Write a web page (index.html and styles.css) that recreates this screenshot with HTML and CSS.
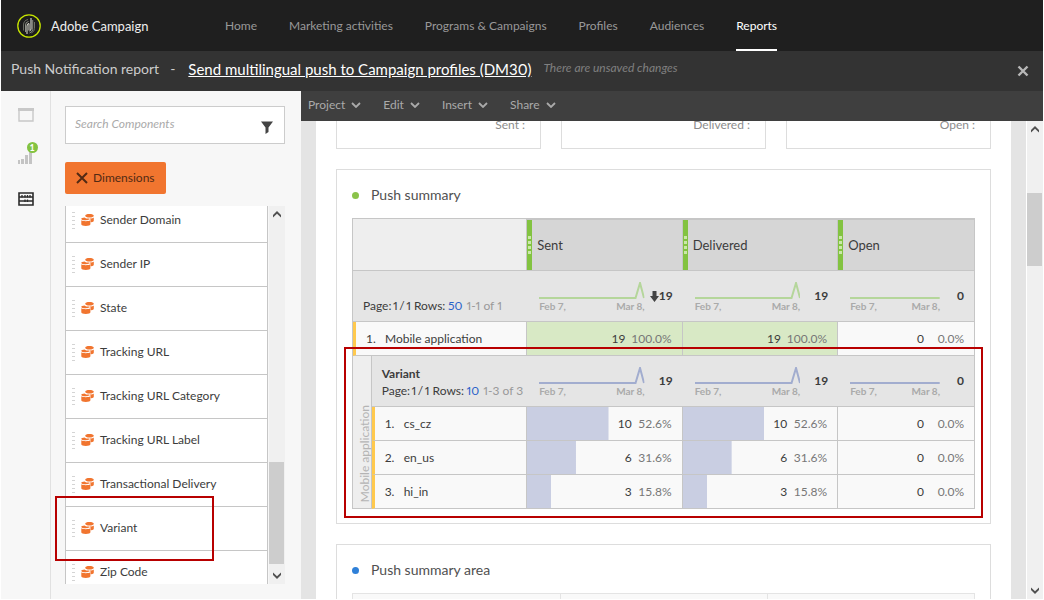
FILE: index.html
```html
<!DOCTYPE html>
<html lang="en">
<head>
<meta charset="utf-8">
<title>Adobe Campaign - Push Notification report</title>
<link rel="stylesheet" href="styles.css">
</head>
<body>
<svg class="sprite" aria-hidden="true">
  <symbol id="coins" viewBox="0 0 13 12">
    <path fill="#f1752f" d="M4.200 1.800C4.200.6 6 0 8.400 0s4.400.6 4.400 1.700S11 3.600 8.500 3.600 4.200 2.900 4.200 1.800zM8.800 4.600c1.800 0 3.300-.3 4-1v2.900c0 1-1 1.600-2.600 1.800l-.6-.2V5.800z"/>
    <path fill="#f1752f" d="M3.600 3.400c.8.9 2.100 1.200 4.500 1.200l.7.5c-.4.700-1.800 1.100-4 1.100C2 6.200.3 5.700.3 4.700c0-.7 1.300-1.200 3.300-1.300zM.3 6.300c1 .7 2.500.9 4.500.9s3.600-.2 4.600-.9v3.900c0 1.100-2 1.700-4.600 1.700S.3 11.300.3 10.200z"/>
  </symbol>
  <symbol id="chev" viewBox="0 0 10 6"><path d="M1 1l4 4 4-4" fill="none" stroke="currentColor" stroke-width="1.800"/></symbol>
  <symbol id="up" viewBox="0 0 8 7"><path d="M0 4l4-4 4 4v2.500L4 2.700 0 6.500z" fill="#505050"/></symbol>
  <symbol id="down" viewBox="0 0 8 7"><path d="M0 3l4 4 4-4V.5L4 4.300 0 .5z" fill="#505050"/></symbol>
  <symbol id="peak" viewBox="0 0 106 18" preserveAspectRatio="none"><path d="M0 16h97l4.500-15 4 15" fill="none" stroke="currentColor" stroke-width="2"/></symbol>
  <symbol id="flat" viewBox="0 0 106 18" preserveAspectRatio="none"><path d="M0 16h106" fill="none" stroke="currentColor" stroke-width="2"/></symbol>
  <symbol id="dots" viewBox="0 0 5 18"><path d="M1 0h3v3H1zM1 5h3v3H1zM1 10h3v3H1zM1 15h3v3H1z" fill="#cbe8a8"/></symbol>
  <symbol id="grip" viewBox="0 0 3 18"><path d="M0 1.500h3M0 5.500h3M0 9.500h3M0 13.500h3M0 17.500h3M1.500 1v1M1.500 5v1" stroke="#d4d4d4" stroke-width="1"/></symbol>
</svg>
<div class="app">
  <header class="topbar">
    <svg class="logo" viewBox="0 0 24 24" aria-hidden="true">
      <circle cx="12" cy="12" r="11.200" fill="#1c1c1c" stroke="#c6e400" stroke-width="1.300"/>
      <g fill="none" stroke-width="1">
        <path stroke="#6a6c62" d="M6.500 16.500V11q0-4.500 4.500-5.500"/>
        <path stroke="#8f9187" d="M8.500 18v-7q0-3 3-3.500"/>
        <path stroke="#e4e4d8" d="M10 20v-8q0-2.500 2-2.500v7"/>
        <path stroke="#f4f4ec" d="M14 4v11q0 1.500-1.500 2"/>
        <path stroke="#8f9187" d="M15.700 6v9.500q0 2.500-3.200 3.500"/>
        <path stroke="#6a6c62" d="M17.500 8v6.500q0 3-3 4.500"/>
      </g>
    </svg>
    <span class="brand">Adobe Campaign</span>
    <nav class="nav">
      <a href="#">Home</a><a href="#">Marketing activities</a><a href="#">Programs &amp; Campaigns</a><a href="#">Profiles</a><a href="#">Audiences</a><a href="#" class="active" aria-current="page">Reports</a>
    </nav>
  </header>
  <div class="titlebar">
    <span class="kind">Push Notification report</span><span class="dash">-</span>
    <a href="#" class="report-name">Send multilingual push to Campaign profiles (DM30)</a>
    <em class="unsaved">There are unsaved changes</em>
    <button class="close" aria-label="Close"><svg viewBox="0 0 12 12" width="12" height="12"><path d="M1.500 1.500l9 9M10.500 1.500l-9 9" stroke="#b8b8b8" stroke-width="2.400"/></svg></button>
  </div>
  <div class="body">
    <nav class="rail" aria-label="Panels">
      <button aria-label="Panels"><svg width="16" height="14" viewBox="0 0 16 14"><path d="M1 1h14v12H1z" fill="none" stroke="#c8c8c8" stroke-width="1.400"/><path d="M0 0h16v3H0z" fill="#c8c8c8"/></svg></button>
      <button aria-label="Visualizations"><svg width="16" height="14" viewBox="0 0 16 14"><path d="M0 10h2v4H0zM3 9h3v5H3zM7 5h3v9H7zM11 1h3v13h-3z" fill="#c4c4c4"/></svg><span class="badge">1</span></button>
      <button aria-label="Components"><svg width="16" height="14" viewBox="0 0 16 14"><path d="M1 1h14v12H1zM1 5h14M1 9h14" fill="none" stroke="#2c2c2c" stroke-width="1.600"/><path d="M4 3v2.500M7 3v2.500M9.500 3v2.500M12 3v2.500M7 7.500v2.500M9.500 7.500v2.500" stroke="#2c2c2c" stroke-width="1.300"/></svg></button>
    </nav>
    <aside class="panel">
      <div class="search">
        <input type="text" placeholder="Search Components" aria-label="Search Components">
        <button aria-label="Filter"><svg width="12" height="13" viewBox="0 0 12 13"><path d="M0 .5h12L7.500 6.500v4.500L4.500 13V6.500z" fill="#444"/></svg></button>
      </div>
      <button class="dimensions"><svg width="12" height="12" viewBox="0 0 12 12"><path d="M1 1l10 10M11 1L1 11" stroke="#522a14" stroke-width="2"/></svg>Dimensions</button>
      <div class="list-area">
        <ul class="list">
          <li><svg class="grip"><use href="#grip"/></svg><svg class="coins"><use href="#coins"/></svg>Sender Domain</li>
          <li><svg class="grip"><use href="#grip"/></svg><svg class="coins"><use href="#coins"/></svg>Sender IP</li>
          <li><svg class="grip"><use href="#grip"/></svg><svg class="coins"><use href="#coins"/></svg>State</li>
          <li><svg class="grip"><use href="#grip"/></svg><svg class="coins"><use href="#coins"/></svg>Tracking URL</li>
          <li><svg class="grip"><use href="#grip"/></svg><svg class="coins"><use href="#coins"/></svg>Tracking URL Category</li>
          <li><svg class="grip"><use href="#grip"/></svg><svg class="coins"><use href="#coins"/></svg>Tracking URL Label</li>
          <li><svg class="grip"><use href="#grip"/></svg><svg class="coins"><use href="#coins"/></svg>Transactional Delivery</li>
          <li><svg class="grip"><use href="#grip"/></svg><svg class="coins"><use href="#coins"/></svg>Variant</li>
          <li><svg class="grip"><use href="#grip"/></svg><svg class="coins"><use href="#coins"/></svg>Zip Code</li>
        </ul>
        <div class="scroll list-scroll"><svg class="arrow"><use href="#up"/></svg><span class="thumb"></span><svg class="arrow"><use href="#down"/></svg></div>
        <span class="mark mark-variant"></span>
      </div>
    </aside>
    <section class="workspace">
      <div class="menubar">
        <button>Project<svg><use href="#chev"/></svg></button>
        <button>Edit<svg><use href="#chev"/></svg></button>
        <button>Insert<svg><use href="#chev"/></svg></button>
        <button>Share<svg><use href="#chev"/></svg></button>
      </div>
      <div class="stage">
        <main class="canvas">
          <div class="kpis"><div>Sent :</div><div>Delivered :</div><div>Open :</div></div>
          <section class="card">
            <h2><i class="dot"></i>Push summary</h2>
            <div class="table-wrap">
              <table>
                <colgroup><col class="c-side"><col class="c-name"><col class="c-num"><col class="c-num"><col class="c-open"></colgroup>
                <tr class="head"><td colspan="2"></td><th scope="col"><div><svg><use href="#dots"/></svg>Sent</div></th><th scope="col"><div><svg><use href="#dots"/></svg>Delivered</div></th><th scope="col"><div><svg><use href="#dots"/></svg>Open</div></th></tr>
                <tr class="totals green">
                  <td colspan="2" class="pager"><div>Page:&thinsp;1&thinsp;/&thinsp;1 Rows:&thinsp;<a href="#">50</a> <span>1-1 of 1</span></div></td>
                  <td><div class="tot"><div class="spark"><svg><use href="#peak"/></svg><p><span>Feb 7,</span><span>Mar 8,</span></p></div><b><svg class="sort" viewBox="0 0 9 11"><path d="M2.500 0h4v5H9l-4.500 6L0 5h2.500z" fill="#444"/></svg>19</b></div></td>
                  <td><div class="tot"><div class="spark"><svg><use href="#peak"/></svg><p><span>Feb 7,</span><span>Mar 8,</span></p></div><b>19</b></div></td>
                  <td><div class="tot short"><div class="spark"><svg><use href="#flat"/></svg><p><span>Feb 7,</span><span>Mar 8,</span></p></div><b>0</b></div></td>
                </tr>
                <tr class="row green">
                  <td colspan="2" class="name"><i>1.</i>Mobile application</td>
                  <td class="full"><div class="val"><span>19</span><span>100.0%</span></div></td>
                  <td class="full"><div class="val"><span>19</span><span>100.0%</span></div></td>
                  <td><div class="val"><span>0</span><span>0.0%</span></div></td>
                </tr>
                <tr class="totals blue">
                  <td rowspan="4" class="side"><span>Mobile application</span></td>
                  <td class="pager"><div><strong>Variant</strong>Page:&thinsp;1&thinsp;/&thinsp;1 Rows:&thinsp;<a href="#">10</a> <span>1-3 of 3</span></div></td>
                  <td><div class="tot"><div class="spark"><svg><use href="#peak"/></svg><p><span>Feb 7,</span><span>Mar 8,</span></p></div><b>19</b></div></td>
                  <td><div class="tot"><div class="spark"><svg><use href="#peak"/></svg><p><span>Feb 7,</span><span>Mar 8,</span></p></div><b>19</b></div></td>
                  <td><div class="tot short"><div class="spark"><svg><use href="#flat"/></svg><p><span>Feb 7,</span><span>Mar 8,</span></p></div><b>0</b></div></td>
                </tr>
                <tr class="row sub">
                  <td class="name"><i>1.</i>cs_cz</td>
                  <td><div class="val" style="--share:52.6%"><span>10</span><span>52.6%</span></div></td>
                  <td><div class="val" style="--share:52.6%"><span>10</span><span>52.6%</span></div></td>
                  <td><div class="val"><span>0</span><span>0.0%</span></div></td>
                </tr>
                <tr class="row sub">
                  <td class="name"><i>2.</i>en_us</td>
                  <td><div class="val" style="--share:31.6%"><span>6</span><span>31.6%</span></div></td>
                  <td><div class="val" style="--share:31.6%"><span>6</span><span>31.6%</span></div></td>
                  <td><div class="val"><span>0</span><span>0.0%</span></div></td>
                </tr>
                <tr class="row sub">
                  <td class="name"><i>3.</i>hi_in</td>
                  <td><div class="val" style="--share:15.8%"><span>3</span><span>15.8%</span></div></td>
                  <td><div class="val" style="--share:15.8%"><span>3</span><span>15.8%</span></div></td>
                  <td><div class="val"><span>0</span><span>0.0%</span></div></td>
                </tr>
              </table>
              <span class="mark mark-table"></span>
            </div>
          </section>
          <section class="card">
            <h2><i class="dot dot-blue"></i>Push summary area</h2>
            <div class="area"><i></i><i></i><i></i></div>
          </section>
        </main>
        <div class="scroll stage-scroll"><svg class="arrow"><use href="#up"/></svg><span class="thumb"></span><svg class="arrow"><use href="#down"/></svg></div>
      </div>
    </section>
  </div>
</div>
</body>
</html>
```
FILE: styles.css
```css
* { box-sizing: border-box; }
body { margin: 0; background: #fff; color: #3c3c3c; font: 12px/16px Lato, "Open Sans", sans-serif; }
button { border: 0; padding: 0; background: none; font: inherit; color: inherit; }
a { color: inherit; text-decoration: none; }
i { font-style: normal; }
.sprite { display: none; }
.app { height: calc(100vh - 1px); margin: 0 1px; display: flex; flex-direction: column; overflow: hidden; }

.topbar { height: 51px; flex: none; display: flex; align-items: center; padding-left: 16px; background: #1f1f1f; color: #999; }
.logo { width: 24px; height: 24px; flex: none; }
.brand { margin-left: 10px; width: 98px; color: #eee; font-size: 13px; white-space: nowrap; }
.nav { display: flex; gap: 32px; margin-left: 76px; height: 100%; white-space: nowrap; }
.nav a { display: flex; align-items: center; height: 51px; padding-top: 2px; border-bottom: 2px solid transparent; }
.nav .active { color: #fff; border-color: #fff; }

.titlebar { height: 40px; flex: none; display: flex; align-items: center; padding: 0 14px 4px 10px; background: #333; white-space: nowrap; font-size: 14px; line-height: 18px; color: #ccc; font-variant-numeric: proportional-nums; }
.dash { margin: 0 13px 0 11px; }
.report-name { color: #fff; font-size: 15px; text-decoration: underline; }
.unsaved { margin-left: 12px; padding-bottom: 2px; font-size: 12px; color: #808080; }
.close { margin-left: auto; padding-top: 4px; display: flex; }

.body { flex: 1; min-height: 0; display: flex; background: #f7f7f7; }
.rail { width: 50px; flex: none; border-right: 1px solid #e1e1e1; display: flex; flex-direction: column; align-items: center; gap: 28px; padding-top: 17px; }
.rail button { position: relative; display: flex; }
.badge { position: absolute; top: -8px; right: -4px; width: 11px; height: 11px; border-radius: 50%; background: #83c341; color: #fff; font-size: 9px; font-weight: bold; line-height: 11px; text-align: center; }

.panel { width: 250px; flex: none; padding: 15px 16px 15px 14px; display: flex; flex-direction: column; align-items: flex-start; }
.search { width: 100%; height: 38px; flex: none; display: flex; align-items: center; border: 1px solid #ccc; background: #fff; padding-right: 11px; }
.search input { flex: 1; min-width: 0; border: 0; outline: 0; padding: 0 0 2px 9px; background: none; font: italic 12px/16px Lato, sans-serif; }
.search input::placeholder { color: #aaa; opacity: 1; }
.search button { display: flex; padding-top: 4px; }
.dimensions { height: 32px; flex: none; margin: 18px 0 12px; padding: 0 11px; display: flex; align-items: center; gap: 5px; border-radius: 2px; background: #f1752f; color: #522a14; }
.list-area { position: relative; flex: 1; min-height: 0; width: 100%; display: flex; gap: 1px; }
.list { flex: 1; margin: 0; padding: 0; list-style: none; overflow: hidden; border: solid #c6c6c6; border-width: 0 1px; background: #fff; }
.list li { height: 44px; display: flex; align-items: center; padding: 0 0 1px 6px; border-bottom: 1px solid #c6c6c6; }
.list li:first-child { margin-top: -7px; }
.grip { width: 3px; height: 18px; }
.coins { width: 13px; height: 12px; margin: 0 6px; }
.scroll { width: 16px; flex: none; background: #f0f0f0; display: flex; flex-direction: column; }
.arrow { width: 8px; height: 7px; margin: 5px 4px; flex: none; }
.thumb { width: 15px; background: #cdcdcd; }
.list-scroll .thumb { height: 27%; margin-top: auto; }
.list-scroll .arrow:last-child { margin: 8px 4px 5px; }
.mark { position: absolute; border: 2px solid #b80000; pointer-events: none; }
.mark-variant { left: -10px; top: 290px; width: 159px; height: 65px; }

.workspace { flex: 1; min-width: 0; display: flex; flex-direction: column; }
.menubar { height: 30px; flex: none; display: flex; align-items: center; gap: 22px; padding: 0 7px 3px; background: #3f3f3f; color: #aaa; }
.menubar button { display: flex; align-items: center; gap: 6px; }
.menubar svg { width: 10px; height: 6px; }
.stage { flex: 1; min-height: 0; display: flex; background: #e4e4e4; padding-left: 15px; }
.canvas { flex: 1; min-width: 0; overflow: hidden; background: #fff; padding: 0 20px; }
.stage-scroll { margin-left: 15px; width: 17px; border-left: 1px solid #fff; }
.stage-scroll .thumb { height: 73px; margin-top: 55px; }
.stage-scroll .arrow:last-child { margin-top: auto; }
.kpis { display: grid; grid-template-columns: repeat(3, 1fr); gap: 20px; margin-top: -40px; }
.kpis div { height: 68px; display: flex; align-items: flex-end; justify-content: flex-end; padding: 0 15px 15px; border: 1px solid #ddd; color: #8c8c8c; }
.card { margin-top: 20px; border: 1px solid #ddd; padding: 16px 15px 14px; }
.card h2 { margin: 0 0 14px; display: flex; align-items: center; gap: 12px; font-size: 14px; line-height: 18px; font-weight: normal; color: #505050; }
.dot { width: 7px; height: 7px; border-radius: 50%; background: #8bc34a; }
.dot-blue { background: #2f80d8; }
.area { display: grid; grid-template-columns: repeat(3, 1fr); height: 120px; border: 1px solid #e4e4e4; background: #f9f9f9; }
.area i + i { border-left: 1px solid #e4e4e4; }

.table-wrap { position: relative; }
.mark-table { inset: 129px -8px -9px; }
table { width: 100%; table-layout: fixed; border-collapse: separate; border-spacing: 0; border: solid #c6c6c6; border-width: 1px 0 0 1px; background: #f9f9f9; }
.c-side { width: 3%; }
.c-name, .c-num { width: 25%; }
.c-open { width: 22%; }
td, th { padding: 0; text-align: left; font-weight: normal; border: solid #c6c6c6; border-width: 0 1px 1px 0; }
.head td { background: #eee; }
.head th { height: 52px; background: #d6d6d6; border-top: 1px solid #c6c6c6; font-size: 13px; }
.head div { display: flex; align-items: center; gap: 5px; }
.head svg { width: 5px; height: 50px; padding: 16px 0; background: #83c341; }
.totals { background: #e5e5e5; }
.totals td { height: 51px; }
.totals td:not(:last-child):not(.side) { border-right: 0; }
.pager { white-space: nowrap; vertical-align: bottom; font-variant-numeric: proportional-nums; }
.pager div { padding: 0 0 7px 10px; line-height: 17px; }
.pager strong { display: block; }
.pager a { color: #2a62c9; margin: 0 1px; }
.pager span { color: #999; }
.tot { display: flex; align-items: center; padding: 0 10px 0 12px; }
.spark { flex: 1; min-width: 0; padding-top: 2px; }
.spark svg { display: block; width: 100%; height: 18px; }
.green .spark svg { color: #b5d69b; }
.blue .spark svg { color: #a2adcf; }
.spark p { margin: 0; display: flex; justify-content: space-between; font-size: 10px; line-height: 12px; font-weight: bold; color: #aaa; }
.tot b { width: 28px; display: flex; align-items: center; justify-content: flex-end; }
.tot.short b { width: 24px; }
.sort { width: 9px; height: 11px; flex: none; }
.row td { height: 34px; }
.name { border-left: 3px solid #ffc94d; padding-left: 10px; }
.name i { display: inline-block; width: 19px; }
.val { height: 33px; display: flex; align-items: center; justify-content: flex-end; gap: 6px; padding-right: 10px; background: linear-gradient(#c9cee2, #c9cee2) no-repeat; background-size: var(--share, 0) 100%; }
.val span + span { min-width: 34px; text-align: right; color: #777; }
.full { background: #d8e9c5; }
.side { background: #eee; vertical-align: bottom; }
.side span { display: block; writing-mode: vertical-rl; transform: rotate(180deg); white-space: nowrap; color: #b4b4b4; margin: 0 0 6px 4px; }
```
